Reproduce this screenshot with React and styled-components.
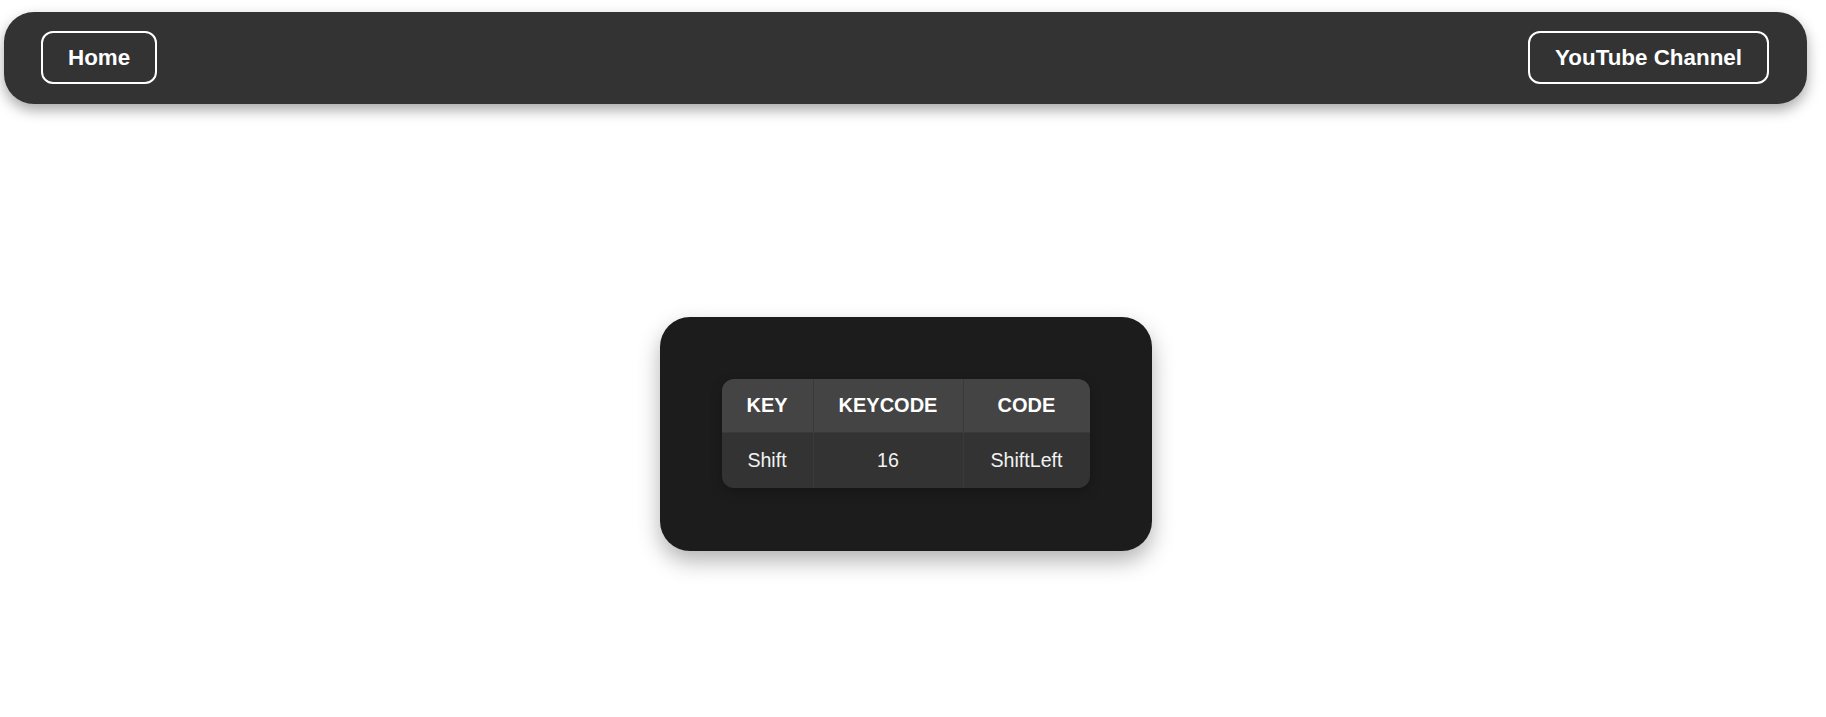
import React from "react";
import styled, { createGlobalStyle } from "styled-components";

const GlobalStyle = createGlobalStyle`
  html, body {
    margin: 0;
    padding: 0;
    background: #ffffff;
    font-family: "Liberation Sans", Arial, sans-serif;
  }
`;

const Page = styled.div`
  min-height: 717px;
  padding: 12px 19px 0 4px;
  box-sizing: border-box;
`;

const Nav = styled.nav`
  display: flex;
  justify-content: space-between;
  align-items: center;
  background-color: #333333;
  border-radius: 30px;
  padding: 19px 38px 20px 37px;
  box-shadow: 0 6px 14px rgba(0, 0, 0, 0.35);
`;

const NavButton = styled.a`
  display: inline-block;
  color: #ffffff;
  font-size: 22.4px;
  font-weight: 700;
  line-height: 25px;
  padding: 12px 25px;
  border: 2px solid #ffffff;
  border-radius: 12px;
  text-decoration: none;
  cursor: pointer;
`;

const Main = styled.main`
  display: flex;
  justify-content: center;
  padding-top: 213px;
`;

const Card = styled.div`
  background-color: #1c1c1c;
  border-radius: 30px;
  padding: 62px 62px 63px;
  box-shadow: 0 10px 22px rgba(0, 0, 0, 0.3);
`;

const Table = styled.div`
  display: grid;
  grid-template-columns: 92px 150px 126px;
  border-radius: 12px;
  overflow: hidden;
  box-shadow: 0 4px 12px rgba(0, 0, 0, 0.25);
`;

const Cell = styled.div`
  background-color: ${({ $head }) => ($head ? "#444444" : "#333333")};
  color: ${({ $head }) => ($head ? "#ffffff" : "#f2f2f2")};
  font-size: ${({ $head }) => ($head ? "20px" : "19.6px")};
  font-weight: ${({ $head }) => ($head ? 700 : 400)};
  line-height: 23px;
  height: ${({ $head }) => ($head ? "54px" : "55px")};
  box-sizing: border-box;
  display: flex;
  align-items: center;
  justify-content: center;
  white-space: nowrap;
  border-right: ${({ $last }) => ($last ? "none" : "1px solid #3a3a3a")};
  border-bottom: ${({ $head }) => ($head ? "1px solid #3a3a3a" : "none")};
`;

const headers = ["KEY", "KEYCODE", "CODE"];
const values = ["Shift", "16", "ShiftLeft"];

export default function App() {
  return (
    <>
      <GlobalStyle />
      <Page>
        <Nav>
          <NavButton>Home</NavButton>
          <NavButton>YouTube Channel</NavButton>
        </Nav>
        <Main>
          <Card>
            <Table>
              {headers.map((h, i) => (
                <Cell key={h} $head $last={i === headers.length - 1}>
                  {h}
                </Cell>
              ))}
              {values.map((v, i) => (
                <Cell key={v} $last={i === values.length - 1}>
                  {v}
                </Cell>
              ))}
            </Table>
          </Card>
        </Main>
      </Page>
    </>
  );
}
